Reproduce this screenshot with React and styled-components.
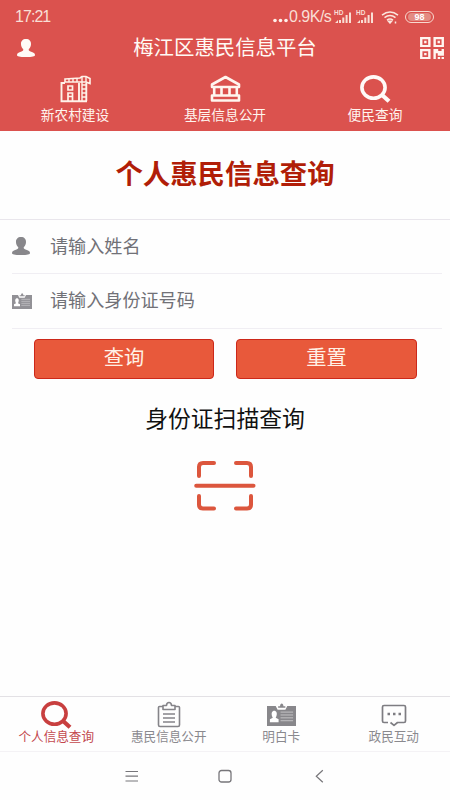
import React from "react";
import styled, { createGlobalStyle } from "styled-components";

const GlobalStyle = createGlobalStyle`
  * { box-sizing: border-box; }
  html, body { margin: 0; padding: 0; background: #fefefe; }
  body, input, button { font-family: "Liberation Sans", "Noto Sans CJK SC", sans-serif; }
`;

const Screen = styled.div`
  width: 450px;
  height: 800px;
  display: flex;
  flex-direction: column;
  background: #fefefe;
  overflow: hidden;
  white-space: nowrap;
`;

const Header = styled.header`
  height: 131px;
  flex: none;
  background: #db524e;
  color: #fff5ee;
`;

const StatusBar = styled.div`
  height: 34px;
  padding: 0 16px 0 15px;
  display: flex;
  align-items: center;
  justify-content: space-between;
  line-height: 34px;
  color: #f9dfd5;
`;

const Clock = styled.span`
  font-size: 16px;
  letter-spacing: -0.95px;
`;

const StatusRight = styled.div`
  display: flex;
  align-items: center;
  height: 34px;
`;

const Speed = styled.span`
  width: 45px;
  margin-left: 1px;
  font-size: 16px;
  letter-spacing: -0.5px;
`;

const TitleBar = styled.div`
  height: 27px;
  padding: 0 6px 0 17px;
  display: grid;
  grid-template-columns: 28px 1fr 15px 24px;
  align-items: center;
`;

const Title = styled.h1`
  margin: 0;
  font-size: 20.4px;
  line-height: 26px;
  font-weight: 400;
  text-align: center;
  color: #fffaf5;
`;

const TopNav = styled.nav`
  height: 70px;
  display: grid;
  grid-template-columns: repeat(3, 150px);
`;

const TopItem = styled.a`
  display: flex;
  flex-direction: column;
  align-items: center;
  padding-top: 14px;
  font-size: 13.7px;
  line-height: 20px;

  svg { margin-bottom: 3px; }
`;

const Heading = styled.h2`
  margin: 0;
  height: 89px;
  padding-top: 25px;
  flex: none;
  border-bottom: 1px solid #e9e6ec;
  text-align: center;
  font-size: 27.4px;
  line-height: 38px;
  font-weight: 700;
  color: #b11e08;
`;

const Field = styled.label`
  height: ${(p) => p.$height}px;
  margin: 0 8px 0 12px;
  flex: none;
  display: flex;
  align-items: center;
  border-bottom: 1px solid #f0eef3;
`;

const FieldIcon = styled.span`
  width: 38px;
  padding-bottom: 1px;
  display: flex;
`;

const Input = styled.input`
  flex: 1;
  height: 40px;
  padding: 1px 0 0;
  border: 0;
  outline: 0;
  background: none;
  font-size: 18.1px;
  color: #5f5f64;

  &::placeholder { color: #717177; opacity: 1; }
`;

const Buttons = styled.div`
  display: grid;
  grid-template-columns: 180px 181px;
  gap: 22px;
  padding: 10px 0 0 34px;
`;

const Button = styled.button`
  height: 40px;
  padding: 0 0 1px;
  border: 1.5px solid #cc281a;
  border-radius: 4px;
  background: #e8593b;
  color: #fff1e6;
  font-size: 20.3px;
  line-height: 37px;
`;

const Scan = styled.section`
  flex: 1;
  display: flex;
  flex-direction: column;
  align-items: center;
  padding-top: 23px;
`;

const ScanLabel = styled.div`
  font-size: 22.8px;
  line-height: 34px;
  color: #111;
  margin-bottom: 24px;
`;

const TabBar = styled.nav`
  height: 56px;
  flex: none;
  display: grid;
  grid-template-columns: repeat(4, 1fr);
  border-top: 1px solid #e3e1e5;
  border-bottom: 1px solid #f4f2f5;
`;

const Tab = styled.a`
  display: flex;
  flex-direction: column;
  align-items: center;
  padding-top: 4px;
  font-size: 12.6px;
  line-height: 18px;
  color: ${(p) => (p.$active ? "#c3484d" : "#8a898e")};

  svg { margin-bottom: -1px; }
`;

const SystemBar = styled.div`
  height: 48px;
  padding-bottom: 1px;
  flex: none;
  display: flex;
  align-items: center;
  justify-content: center;
  gap: 79px;
`;

const Person = ({ color }) => (
  <svg width="18" height="18" viewBox="0 0 18 18" fill={color}>
    <path d="M9 0C5.800 0 3.800 2 4 5.200 4.100 7.300 4.900 8.900 6.200 10 6.500 11.400 6 12 4.500 12.400 1.500 13.200 0 14.100 0 16c0 1.400 2.400 2 9 2s9-.6 9-2c0-1.900-1.500-2.800-4.500-3.600C12 12 11.500 11.400 11.800 10c1.300-1.100 2.100-2.700 2.200-4.800C14.200 2 12.200 0 9 0Z" />
  </svg>
);

const QrCode = () => (
  <svg width="24" height="22" viewBox="0 0 25 23" fill="#fff5f0">
    <path fillRule="evenodd" d="M0 0h11v10.500H0ZM2.500 2.300v6h6v-6ZM14 0h11v10.500H14ZM16.500 2.300v6h6v-6ZM0 12.500h11V23H0ZM2.500 14.800v6h6v-6Z" />
    <path d="M4.300 4h2.500v2.500H4.300ZM18.300 4h2.500v2.500h-2.500ZM4.300 16.600h2.500v2.500H4.300ZM14 12.500h5v2.200h3.500v-2.200H25v7h-6.500V17h-2v6H14ZM18.500 21h2.500v2h-2.500ZM22.500 21H25v2h-2.500Z" />
  </svg>
);

const Search = ({ color }) => (
  <svg width="31" height="28" viewBox="0 0 31 28" fill="none" stroke={color}>
    <ellipse cx="13.500" cy="12.600" rx="11.600" ry="10.700" strokeWidth="3.600" />
    <path d="M21.500 19.500 29 26.300" strokeWidth="4.200" />
  </svg>
);

const Dots = () => (
  <svg width="15" height="12" viewBox="0 0 15 12" fill="#fff1eb">
    <circle cx="2" cy="9.500" r="1.800" />
    <circle cx="7.500" cy="9.500" r="1.800" />
    <circle cx="13" cy="9.500" r="1.800" />
  </svg>
);

const SignalBox = styled.span`
  width: 18px;
  height: 14px;
  margin-right: ${(p) => p.$gap}px;
  display: flex;
  position: relative;
`;

const HdMark = styled.span`
  position: absolute;
  left: 0;
  top: 0;
  font-size: 6.500px;
  line-height: 6px;
  font-weight: 700;
`;

const Signal = ({ gap }) => (
  <SignalBox $gap={gap}>
    <HdMark>HD</HdMark>
    <svg width="18" height="14" viewBox="0 0 18 14" fill="#f9dfd5">
      <path d="M1 13 4 10v3ZM5 10h2v3H5ZM8.300 7.500h2V13h-2ZM11.600 5h2v8h-2ZM15 2.500h2V13h-2Z" />
    </svg>
  </SignalBox>
);

const Wifi = () => (
  <svg width="18" height="14" viewBox="0 0 18 14" fill="none" stroke="#fbe6de" strokeWidth="1.500">
    <path d="M1 5.200q8-6.500 16 0M3.500 7.700q5.500-4.500 11 0M6 10.200q3-2.500 6 0" />
    <path d="m7.500 11.300 1.500 1.700 1.500-1.700ZM14.500 11.500v2" />
  </svg>
);

const Battery = styled.span`
  width: 29px;
  height: 12px;
  margin-left: 6px;
  border: 1px solid #f8d9cf;
  border-radius: 6px;
  padding: 1px 2px;
  display: flex;
`;

const Charge = styled.span`
  flex: 1;
  border-radius: 4px;
  background: #e38b82;
  color: #fff;
  font-size: 9px;
  line-height: 8.500px;
  font-weight: 700;
  text-align: center;
`;

const Building = () => (
  <svg width="31" height="28" viewBox="0 0 31 28" fill="none" stroke="#fff2e9">
    <path d="M5 8H1.500V26.300H27M19 8v18M26.300 8v18" strokeWidth="1.900" />
    <path d="M5 4 20 3 22 1.500h4l4 2v5l-4-1.500H5Z" strokeWidth="1.600" />
    <path d="M9 3.500V7M13 3.500V7M17 3v4M22 1.500V26M26 1.500V7M22 10h4M22 14h4M22 18h4M22 22h4" strokeWidth="1.400" />
    <path d="M8 11h4.500v4H8ZM8 18h4.500v3.500H8ZM8 21.500V26M12.500 21.500V26" strokeWidth="1.700" />
  </svg>
);

const Bank = () => (
  <svg width="31" height="28" viewBox="0 0 31 28" fill="none" stroke="#fff6ef" strokeWidth="2.600" strokeLinejoin="round">
    <path d="M2 9.500 15.500 2 29 9.500v2.500H2ZM4.200 13v7M26.800 13v7M11.500 13v7M19.500 13v7M2 20.500h27v5H2Z" />
  </svg>
);

const IdCard = ({ width, height, color }) => (
  <svg width={width} height={height} viewBox="0 0 30 24" preserveAspectRatio="none">
    <path d="M0 3h9l2 4h8l2-4h9v21H0Z" fill={color} />
    <path d="M11.500 5V3.500h2C13.500-.5 17-.5 17 3.500h2V5Z" fill={color} />
    <path d="M3 20v-3l3-1.500c-2.500-5-.5-7.500 1.500-7.500s4 2.500 1.500 7.500l3 1.500v3Z" fill="#fff" />
    <path d="M14 9.500h13M14 12.500h13M14 15.500h13M14 18.500h13" stroke="#fff" strokeWidth=".8" opacity=".65" />
  </svg>
);

const TabCard = styled.span`
  height: 27px;
  padding-top: 2px;
  display: flex;
`;

const Clipboard = () => (
  <svg width="24" height="28" viewBox="0 0 24 28" fill="none" stroke="#858489" strokeWidth="1.600" strokeLinejoin="round">
    <path d="M6 5.500H2.500Q1.500 5.500 1.500 6.500v17.500q0 1.500 1.500 1.500h18q1.500 0 1.500-1.500V6.500q0-1-1-1H18" />
    <path d="M6 8.500V4.500h3.500q.2-3 2.500-3t2.500 3H18v4Z" />
    <path d="M6 13h12M6 17h12M6 21h12" />
  </svg>
);

const Chat = () => (
  <svg width="26" height="28" viewBox="0 0 26 28" fill="none" stroke="#7e7d82" strokeWidth="1.700" strokeLinejoin="round">
    <path d="M7 21.500H3Q1.500 21.500 1.500 20V6Q1.500 4.500 3 4.500h20q1.500 0 1.500 1.500V20q0 1.500-1.500 1.500h-6.500L13 24.300 9.500 21.500" />
    <path d="M6.500 13H9M12 13h2.500M17.500 13H20" strokeWidth="2.300" />
  </svg>
);

const ScanIcon = () => (
  <svg width="62" height="52" viewBox="0 0 62 52" fill="none" stroke="#dc563d" strokeWidth="4" strokeLinecap="round" strokeLinejoin="round">
    <path d="M20 3H9Q5 3 5 7v9M42 3h11q4 0 4 4v9M20 48.500H9q-4 0-4-4V36M42 48.500h11q4 0 4-4V36M2.200 25.700h57.300" />
  </svg>
);

const MenuIcon = () => (
  <svg width="14" height="14" viewBox="0 0 14 14" stroke="#77767a" strokeWidth="1.200">
    <path d="M.5 2.500h12.500M.5 7.200h12.500M.5 12h12.500" />
  </svg>
);

const HomeIcon = () => (
  <svg width="14" height="14" viewBox="0 0 14 14" fill="none" stroke="#77767a" strokeWidth="1.300">
    <rect x="1" y="1.500" width="12" height="11.500" rx="2.500" />
  </svg>
);

const BackIcon = () => (
  <svg width="14" height="14" viewBox="0 0 14 14" fill="none" stroke="#77767a" strokeWidth="1.200">
    <path d="M11.800 1.200 5.300 7.200l6.500 6" />
  </svg>
);

export default function App() {
  return (
    <>
      <GlobalStyle />
      <Screen>
        <Header>
          <StatusBar>
            <Clock>17:21</Clock>
            <StatusRight>
              <Dots />
              <Speed>0.9K/s</Speed>
              <Signal gap={4} />
              <Signal gap={7} />
              <Wifi />
              <Battery><Charge>98</Charge></Battery>
            </StatusRight>
          </StatusBar>
          <TitleBar>
            <Person color="#fffaf6" />
            <Title>梅江区惠民信息平台</Title>
            <span />
            <QrCode />
          </TitleBar>
          <TopNav>
            <TopItem><Building />新农村建设</TopItem>
            <TopItem><Bank />基层信息公开</TopItem>
            <TopItem><Search color="#fffaf8" />便民查询</TopItem>
          </TopNav>
        </Header>
        <Heading>个人惠民信息查询</Heading>
        <Field $height={54}>
          <FieldIcon><Person color="#88878b" /></FieldIcon>
          <Input placeholder="请输入姓名" />
        </Field>
        <Field $height={55}>
          <FieldIcon><IdCard width={20} height={16} color="#929196" /></FieldIcon>
          <Input placeholder="请输入身份证号码" />
        </Field>
        <Buttons>
          <Button>查询</Button>
          <Button>重置</Button>
        </Buttons>
        <Scan>
          <ScanLabel>身份证扫描查询</ScanLabel>
          <ScanIcon />
        </Scan>
        <TabBar>
          <Tab $active><Search color="#c83f3f" />个人信息查询</Tab>
          <Tab><Clipboard />惠民信息公开</Tab>
          <Tab><TabCard><IdCard width={29} height={23} color="#88878b" /></TabCard>明白卡</Tab>
          <Tab><Chat />政民互动</Tab>
        </TabBar>
        <SystemBar>
          <MenuIcon />
          <HomeIcon />
          <BackIcon />
        </SystemBar>
      </Screen>
    </>
  );
}
